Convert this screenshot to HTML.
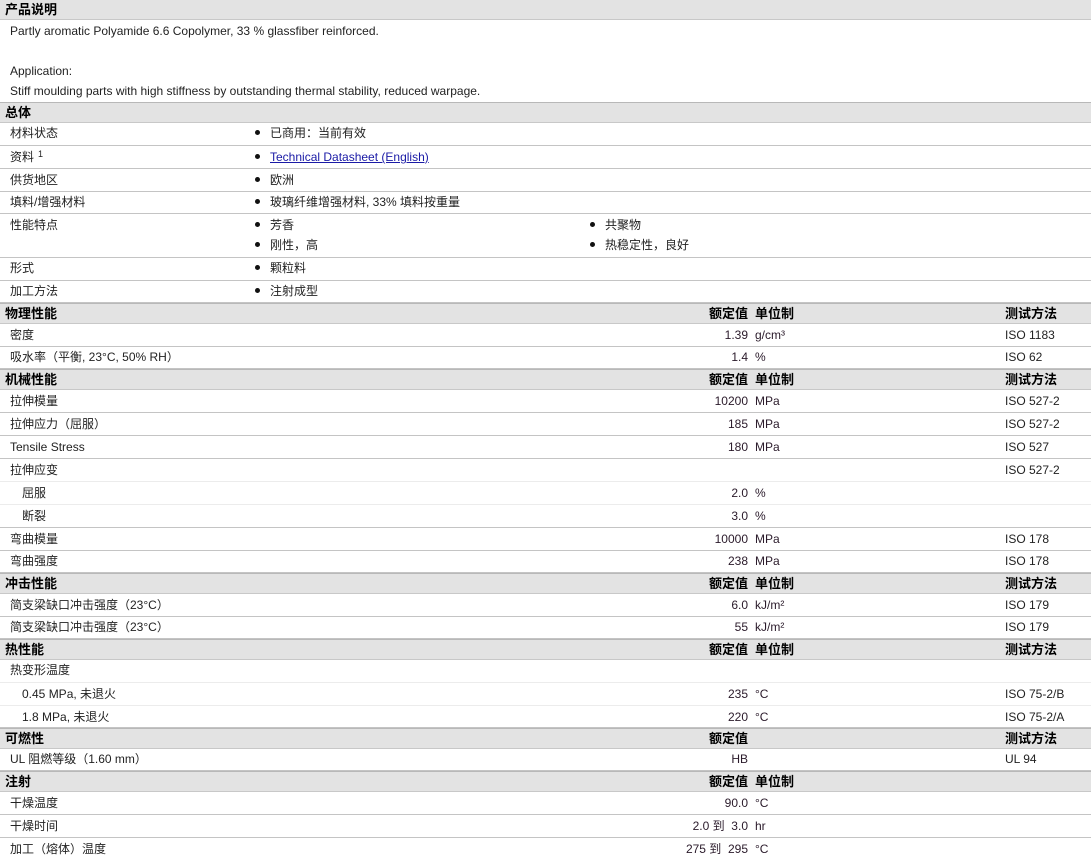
<!DOCTYPE html>
<html><head><meta charset="utf-8">
<style>
*{margin:0;padding:0;box-sizing:border-box}
body{width:1091px;height:860px;overflow:hidden;background:#fff;font-family:"Liberation Sans","Noto Sans CJK SC",sans-serif;font-size:12px;color:#222;position:relative}
.r{position:absolute;left:0;width:1091px;border-bottom:1px solid #c4c4c4}
.s{border-bottom:1px solid #ececec}
.h{background:#e3e3e3;border-top:1px solid #b8b8b8;border-bottom:1px solid #c8c8c8;font-weight:bold;font-size:13px;color:#000}
.r span{position:absolute;white-space:nowrap}
.l{left:10px}
.l2{left:22px}
.hl{left:5px}
.b{left:255px}
.b2{left:590px}
.b:before,.b2:before{content:"";display:inline-block;width:5px;height:5px;border-radius:50%;background:#111;margin-right:10px;vertical-align:middle;position:relative;top:-1px}
.v{right:343px;text-align:right;color:#2a1a2a}
.u{left:755px;color:#2a1a2a}
.t{left:1005px}
.hv{right:343px}
.hu{left:755px}
.ht{left:1005px}
a{color:#1a1aa6;text-decoration:underline}
sup{font-size:9px;position:relative;top:-3px;vertical-align:top;margin-left:4px}
</style></head><body>
<div class="r h" style="top:-1px;height:21px;line-height:19px"><span class="hl">产品说明</span></div>
<div style="position:absolute;left:10px;top:24px;line-height:15px;color:#222">Partly aromatic Polyamide 6.6 Copolymer, 33 % glassfiber reinforced.</div>
<div style="position:absolute;left:10px;top:64px;line-height:15px;color:#222">Application:</div>
<div style="position:absolute;left:10px;top:84px;line-height:15px;color:#222">Stiff moulding parts with high stiffness by outstanding thermal stability, reduced warpage.</div>

<div class="r h" style="top:102px;height:21px;line-height:19px"><span class="hl">总体</span></div>
<div class="r" style="top:123px;height:23px;line-height:20px"><span class="l">材料状态</span><span class="b">已商用：当前有效</span></div>
<div class="r" style="top:146px;height:23px;line-height:22px"><span class="l">资料<sup>1</sup></span><span class="b"><a>Technical Datasheet (English)</a></span></div>
<div class="r" style="top:169px;height:23px;line-height:22px"><span class="l">供货地区</span><span class="b">欧洲</span></div>
<div class="r" style="top:192px;height:22px;line-height:20px"><span class="l">填料/增强材料</span><span class="b">玻璃纤维增强材料, 33% 填料按重量</span></div>
<div class="r" style="top:214px;height:44px;line-height:22px"><span class="l" style="top:0">性能特点</span><span class="b" style="top:0">芳香</span><span class="b2" style="top:0">共聚物</span><span class="b" style="top:20px">刚性，高</span><span class="b2" style="top:20px">热稳定性，良好</span></div>
<div class="r" style="top:258px;height:23px;line-height:21px"><span class="l">形式</span><span class="b">颗粒料</span></div>
<div class="r" style="top:281px;height:22px;line-height:21px"><span class="l">加工方法</span><span class="b">注射成型</span></div>

<div class="r h" style="top:303px;height:21px;line-height:19px"><span class="hl">物理性能</span><span class="hv">额定值</span><span class="hu">单位制</span><span class="ht">测试方法</span></div>
<div class="r" style="top:324px;height:23px;line-height:22px"><span class="l">密度</span><span class="v">1.39</span><span class="u">g/cm³</span><span class="t">ISO 1183</span></div>
<div class="r" style="top:347px;height:22px;line-height:21px"><span class="l">吸水率（平衡, 23°C, 50% RH）</span><span class="v">1.4</span><span class="u">%</span><span class="t">ISO 62</span></div>

<div class="r h" style="top:369px;height:21px;line-height:19px"><span class="hl">机械性能</span><span class="hv">额定值</span><span class="hu">单位制</span><span class="ht">测试方法</span></div>
<div class="r" style="top:390px;height:23px;line-height:22px"><span class="l">拉伸模量</span><span class="v">10200</span><span class="u">MPa</span><span class="t">ISO 527-2</span></div>
<div class="r" style="top:413px;height:23px;line-height:22px"><span class="l">拉伸应力（屈服）</span><span class="v">185</span><span class="u">MPa</span><span class="t">ISO 527-2</span></div>
<div class="r" style="top:436px;height:23px;line-height:22px"><span class="l">Tensile Stress</span><span class="v">180</span><span class="u">MPa</span><span class="t">ISO 527</span></div>
<div class="r s" style="top:459px;height:23px;line-height:22px"><span class="l">拉伸应变</span><span class="t">ISO 527-2</span></div>
<div class="r s" style="top:482px;height:23px;line-height:22px"><span class="l2">屈服</span><span class="v">2.0</span><span class="u">%</span></div>
<div class="r" style="top:505px;height:23px;line-height:22px"><span class="l2">断裂</span><span class="v">3.0</span><span class="u">%</span></div>
<div class="r" style="top:528px;height:23px;line-height:22px"><span class="l">弯曲模量</span><span class="v">10000</span><span class="u">MPa</span><span class="t">ISO 178</span></div>
<div class="r" style="top:551px;height:22px;line-height:21px"><span class="l">弯曲强度</span><span class="v">238</span><span class="u">MPa</span><span class="t">ISO 178</span></div>

<div class="r h" style="top:573px;height:21px;line-height:19px"><span class="hl">冲击性能</span><span class="hv">额定值</span><span class="hu">单位制</span><span class="ht">测试方法</span></div>
<div class="r" style="top:594px;height:23px;line-height:22px"><span class="l">简支梁缺口冲击强度（23°C）</span><span class="v">6.0</span><span class="u">kJ/m²</span><span class="t">ISO 179</span></div>
<div class="r" style="top:617px;height:22px;line-height:21px"><span class="l">简支梁缺口冲击强度（23°C）</span><span class="v">55</span><span class="u">kJ/m²</span><span class="t">ISO 179</span></div>

<div class="r h" style="top:639px;height:21px;line-height:19px"><span class="hl">热性能</span><span class="hv">额定值</span><span class="hu">单位制</span><span class="ht">测试方法</span></div>
<div class="r s" style="top:660px;height:23px;line-height:21px"><span class="l">热变形温度</span></div>
<div class="r s" style="top:683px;height:23px;line-height:22px"><span class="l2">0.45 MPa, 未退火</span><span class="v">235</span><span class="u">°C</span><span class="t">ISO 75-2/B</span></div>
<div class="r" style="top:706px;height:22px;line-height:22px"><span class="l2">1.8 MPa, 未退火</span><span class="v">220</span><span class="u">°C</span><span class="t">ISO 75-2/A</span></div>

<div class="r h" style="top:728px;height:21px;line-height:19px"><span class="hl">可燃性</span><span class="hv">额定值</span><span class="ht">测试方法</span></div>
<div class="r" style="top:749px;height:22px;line-height:21px"><span class="l">UL 阻燃等级（1.60 mm）</span><span class="v">HB</span><span class="t">UL 94</span></div>

<div class="r h" style="top:771px;height:21px;line-height:19px"><span class="hl">注射</span><span class="hv">额定值</span><span class="hu">单位制</span></div>
<div class="r" style="top:792px;height:23px;line-height:22px"><span class="l">干燥温度</span><span class="v">90.0</span><span class="u">°C</span></div>
<div class="r" style="top:815px;height:23px;line-height:22px"><span class="l">干燥时间</span><span class="v">2.0 到 &nbsp;3.0</span><span class="u">hr</span></div>
<div class="r" style="top:838px;height:23px;line-height:22px;border-bottom:none"><span class="l">加工（熔体）温度</span><span class="v">275 到 &nbsp;295</span><span class="u">°C</span></div>
</body></html>
